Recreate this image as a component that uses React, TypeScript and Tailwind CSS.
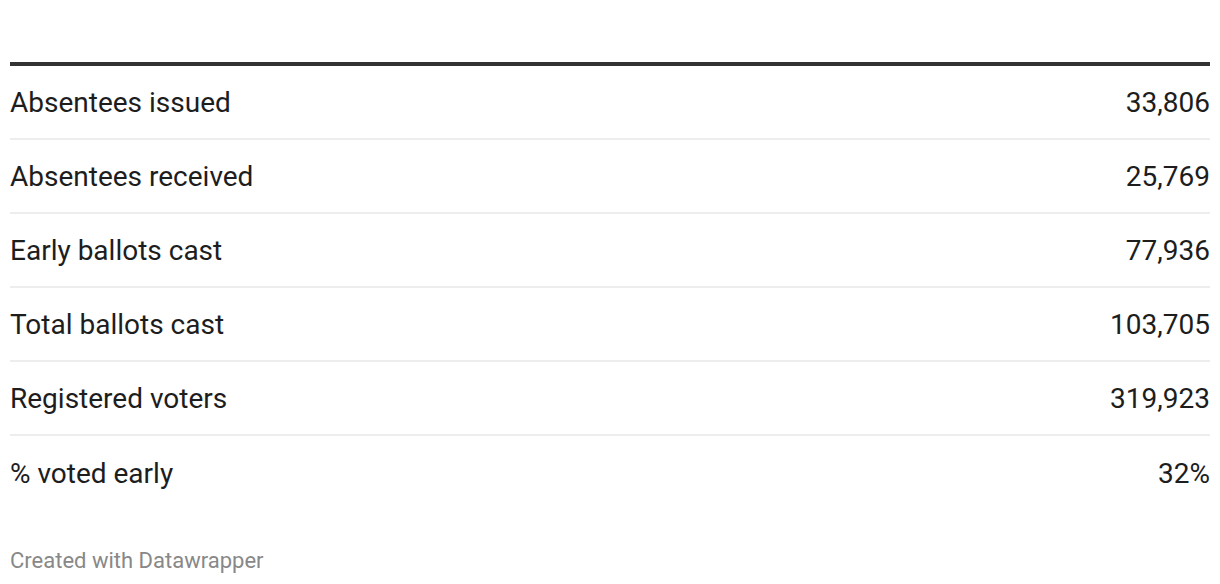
import React from "react";

const rows: [string, string][] = [
  ["Absentees issued", "33,806"],
  ["Absentees received", "25,769"],
  ["Early ballots cast", "77,936"],
  ["Total ballots cast", "103,705"],
  ["Registered voters", "319,923"],
  ["% voted early", "32%"],
];

export default function App() {
  return (
    <div
      className="w-[1220px] h-[584px] bg-white px-[10px] pt-[62px]"
      style={{ fontFamily: "Roboto, 'Liberation Sans', sans-serif" }}
    >
      <div className="border-t-[4px] border-[#333333]">
        {rows.map(([label, value], i) => (
          <div
            key={label}
            className={`flex items-center justify-between h-[74px] pt-[2px] text-[28px] leading-[32px] text-[#1d1d1d] ${
              i < rows.length - 1 ? "border-b-2 border-[#ededed]" : ""
            }`}
          >
            <span>{label}</span>
            <span>{value}</span>
          </div>
        ))}
      </div>
      <div className="mt-[38px] text-[22px] leading-[26px] text-[#888888]">Created with Datawrapper</div>
    </div>
  );
}
